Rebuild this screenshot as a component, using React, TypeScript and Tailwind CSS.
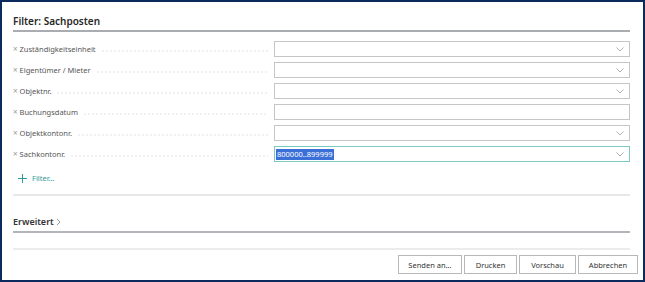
import React from "react";

const rows: { label: string; select: boolean; value?: string; focused?: boolean }[] = [
  { label: "Zuständigkeitseinheit", select: true },
  { label: "Eigentümer / Mieter", select: true },
  { label: "Objektnr.", select: true },
  { label: "Buchungsdatum", select: false },
  { label: "Objektkontonr.", select: true },
  { label: "Sachkontonr.", select: true, value: "800000..899999", focused: true },
];

function Chevron() {
  return (
    <svg width="8" height="5" viewBox="0 0 8 5" className="shrink-0">
      <path d="M0.5 0.5 L4 4 L7.5 0.5" fill="none" stroke="#a8a8a8" strokeWidth="0.9" />
    </svg>
  );
}

export default function App() {
  return (
    <div
      className="w-[645px] h-[282px] border-2 border-[#0d2a5e] bg-white overflow-hidden box-border"
      style={{ fontFamily: '"Noto Sans", "Open Sans", sans-serif' }}
    >
      <div className="pl-[11px] pr-[13px]">
        <div className="h-[28px] flex items-end pb-[2px]">
          <span className="text-[10px] leading-[13px] font-semibold text-[#262626]">Filter: Sachposten</span>
        </div>
        <div className="h-[2px] bg-[#a9adb2]" />
        <div className="mt-[9px] flex flex-col gap-[5px]">
          {rows.map((r) => (
            <div key={r.label} className="flex h-[16px] items-center">
              <div className="flex items-center w-[261px] pr-[6px] h-[16px]">
                <span className="text-[8px] text-[#9a9a9a] leading-[12px]">×</span>
                <span className="ml-[2px] text-[7.5px] text-[#555] whitespace-nowrap leading-[12px]">{r.label}</span>
                <div className="flex-1 ml-[5px] mt-[4px] h-[2px] bg-[radial-gradient(circle,#d2d2d2_0.5px,transparent_0.8px)] bg-[length:4px_2px]" />
              </div>
              <div
                className={
                  "flex-1 h-[16px] flex items-center pr-[5px] pl-[1px] bg-white border " +
                  (r.focused ? "border-[#7cc9c6]" : "border-[#c6c6c6]")
                }
              >
                <div className="flex-1 flex items-center">
                  {r.value ? (
                    <span className="bg-[#3b6fd8] text-white text-[7.5px] leading-[11px] inline-block px-[1px]">
                      {r.value}
                    </span>
                  ) : null}
                </div>
                {r.select ? <Chevron /> : null}
              </div>
            </div>
          ))}
        </div>
        <div className="mt-[6px] h-[20px] flex items-center pl-[5px]">
          <svg width="9" height="9" viewBox="0 0 9 9">
            <path d="M4.5 0 V9 M0 4.5 H9" stroke="#2b9a98" strokeWidth="1" />
          </svg>
          <span className="ml-[5px] text-[7.5px] text-[#2b9a98] leading-[12px]">Filter...</span>
        </div>
        <div className="mt-[6px] h-[2px] bg-[#e8e8e8]" />
        <div className="mt-[16px] h-[19px] flex items-center">
          <span className="text-[9px] font-semibold text-[#333] leading-[12px]">Erweitert</span>
          <svg width="5" height="8" viewBox="0 0 5 8" className="ml-[2px]">
            <path d="M1 1 L4 4 L1 7" fill="none" stroke="#999" strokeWidth="1" />
          </svg>
        </div>
        <div className="h-[2px] bg-[#b2b6bb]" />
        <div className="mt-[15px] h-[2px] bg-[#ececec]" />
        <div className="mt-[5px] mr-[-8px] flex justify-end gap-[2px]">
          {[
            ["Senden an...", "w-[64px]"],
            ["Drucken", "w-[53px]"],
            ["Vorschau", "w-[57px]"],
            ["Abbrechen", "w-[60px]"],
          ].map(([t, w]) => (
            <div
              key={t}
              className={w + " h-[19px] border border-[#b8b8b8] bg-white flex items-center justify-center text-[7.5px] leading-[12px] text-[#333]"}
            >
              {t}
            </div>
          ))}
        </div>
      </div>
    </div>
  );
}
